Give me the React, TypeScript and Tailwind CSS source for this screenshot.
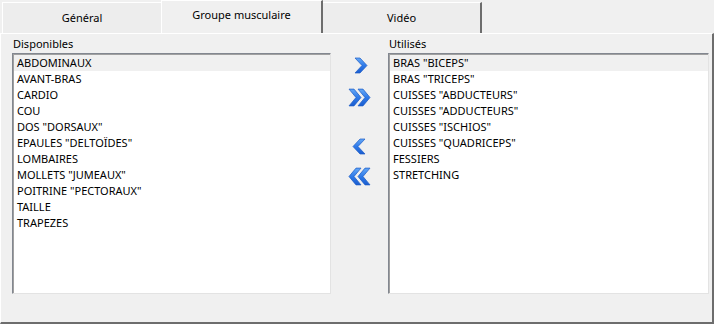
import React from 'react';

const dispo = [
  'ABDOMINAUX',
  'AVANT-BRAS',
  'CARDIO',
  'COU',
  'DOS "DORSAUX"',
  'EPAULES "DELTOÏDES"',
  'LOMBAIRES',
  'MOLLETS "JUMEAUX"',
  'POITRINE "PECTORAUX"',
  'TAILLE',
  'TRAPEZES',
];

const utilises = [
  'BRAS "BICEPS"',
  'BRAS "TRICEPS"',
  'CUISSES "ABDUCTEURS"',
  'CUISSES "ADDUCTEURS"',
  'CUISSES "ISCHIOS"',
  'CUISSES "QUADRICEPS"',
  'FESSIERS',
  'STRETCHING',
];

const Chevron = ({ left = false, double = false }: { left?: boolean; double?: boolean }) => {
  // one blue chevron, 13x17
  const one = (dx: number) => (
    <polygon
      key={dx}
      points={`${dx + 1},1 ${dx + 6},1 ${dx + 13},8.5 ${dx + 6},16 ${dx + 1},16 ${dx + 8},8.5`}
      fill="url(#blue)"
      stroke="#1d5cc6"
      strokeWidth="0.7"
      strokeLinejoin="round"
    />
  );
  const w = double ? 23 : 15;
  return (
    <svg width={w} height={double ? 19 : 17} viewBox={`0 0 ${w} 17`} preserveAspectRatio="none">
      <defs>
        <linearGradient id="blue" x1="0" y1="0" x2="0" y2="1">
          <stop offset="0" stopColor="#64a8f7" />
          <stop offset="0.5" stopColor="#2f7ae8" />
          <stop offset="1" stopColor="#1a5dd0" />
        </linearGradient>
      </defs>
      <g transform={left ? `translate(${w},0) scale(-1,1)` : undefined}>
        {double ? [one(0), one(9)] : one(1)}
      </g>
    </svg>
  );
};

const ListBox = ({ items }: { items: string[] }) => (
  <div className="h-[241px] border border-t-[#828790] border-l-[#828790] border-r-[#e3e3e3] border-b-[#e3e3e3] bg-white">
    <div className="h-full border-l border-t border-[#a0a0a0] border-r-0 border-b-0">
      {items.map((it, i) => (
        <div
          key={it}
          className={`h-4 leading-4 pl-[3px] text-[11px] text-black ${i === 0 ? 'bg-[#f0f0f0]' : ''}`}
        >
          {it}
        </div>
      ))}
    </div>
  </div>
);

const App = () => {
  return (
    <div
      className="w-[714px] h-[324px] bg-[#f0f0f0] flex flex-col overflow-hidden"
      style={{ fontFamily: '"Noto Sans", "Open Sans", sans-serif' }}
    >
      {/* Tabs */}
      <div className="flex h-[33px] items-end pl-[2px] text-[11px] text-black">
        <div className="w-[159px] h-[31px] bg-[#ededed] border-t border-l border-white flex items-center justify-center">
          Général
        </div>
        <div className="w-[162px] h-[33px] bg-[#f0f0f0] border-t border-l border-white border-r-2 border-r-[#6d6d6d] flex items-center justify-center pb-[3px]">
          Groupe musculaire
        </div>
        <div className="w-[159px] h-[31px] bg-[#ededed] border-t border-white border-r-2 border-r-[#6d6d6d] flex items-center justify-center">
          Vidéo
        </div>
      </div>

      {/* Panel */}
      <div className="flex-1 border-t border-l border-white border-r-2 border-r-[#6d6d6d] border-b-2 border-b-[#6d6d6d]">
        <div className="flex pl-[11px] pr-[2px] pt-px">
          <div className="w-[319px] flex flex-col">
            <div className="h-[18px] text-[11px] leading-[18px] pl-px">Disponibles</div>
            <ListBox items={dispo} />
          </div>
          <div className="w-[57px] flex flex-col items-center pt-[20px]">
            <div className="h-[20px] flex items-center justify-center ml-px">
              <Chevron />
            </div>
            <div className="h-[20px] mt-[12px] flex items-center justify-center">
              <Chevron double />
            </div>
            <div className="h-[20px] mt-[29px] flex items-center justify-center">
              <Chevron left />
            </div>
            <div className="h-[20px] mt-[10px] flex items-center justify-center">
              <Chevron left double />
            </div>
          </div>
          <div className="w-[321px] flex flex-col">
            <div className="h-[18px] text-[11px] leading-[18px] pl-px">Utilisés</div>
            <ListBox items={utilises} />
          </div>
        </div>
      </div>
    </div>
  );
};

export default App;
